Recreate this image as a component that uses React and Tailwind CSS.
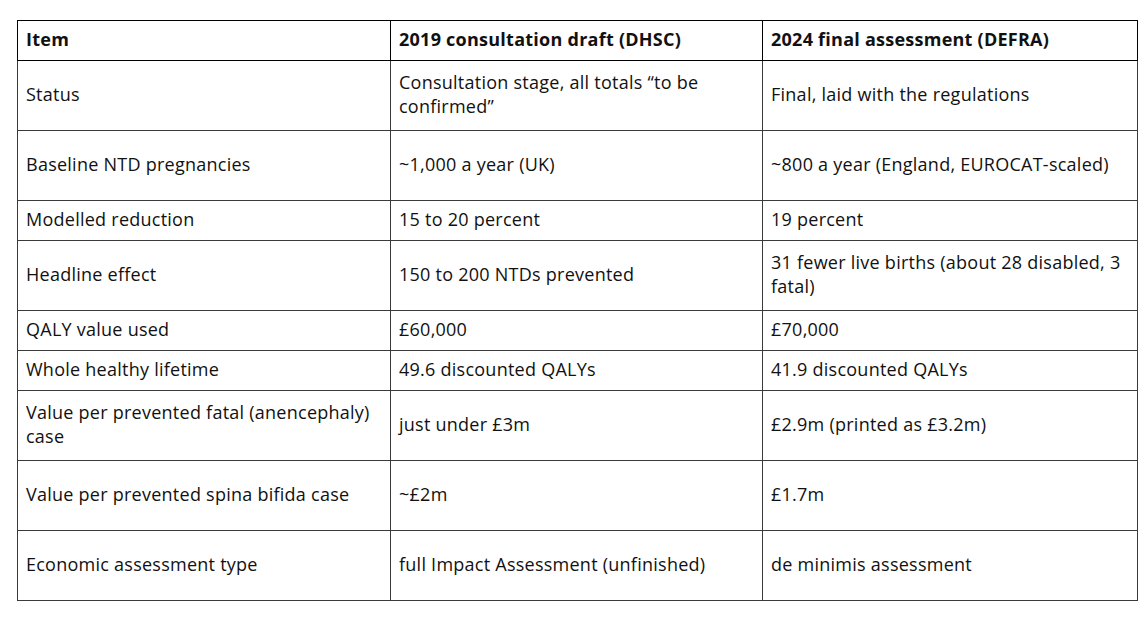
import React from 'react'

const rows = [
  { h: 'h-[70px]', a: 'Status', b: 'Consultation stage, all totals “to be confirmed”', c: 'Final, laid with the regulations' },
  { h: 'h-[70px]', a: 'Baseline NTD pregnancies', b: '~1,000 a year (UK)', c: '~800 a year (England, EUROCAT-scaled)' },
  { h: 'h-[40px]', a: 'Modelled reduction', b: '15 to 20 percent', c: '19 percent' },
  { h: 'h-[70px]', a: 'Headline effect', b: '150 to 200 NTDs prevented', c: '31 fewer live births (about 28 disabled, 3 fatal)' },
  { h: 'h-[40px]', a: 'QALY value used', b: '£60,000', c: '£70,000' },
  { h: 'h-[40px]', a: 'Whole healthy lifetime', b: '49.6 discounted QALYs', c: '41.9 discounted QALYs' },
  { h: 'h-[70px]', a: 'Value per prevented fatal (anencephaly) case', b: 'just under £3m', c: '£2.9m (printed as £3.2m)' },
  { h: 'h-[70px]', a: 'Value per prevented spina bifida case', b: '~£2m', c: '£1.7m' },
  { h: 'h-[70px]', a: 'Economic assessment type', b: 'full Impact Assessment (unfinished)', c: 'de minimis assessment' },
]

function App() {
  // text sits a touch high in the cell, like Word does
  const cell = 'border border-[#3a3a3a] px-2 pt-0 pb-[4px] align-middle text-left'

  return (
    <div className="min-h-screen bg-white pt-[20px] pl-[17px] font-['Open_Sans',sans-serif] text-[18px] leading-[24px] tracking-[0.25px] text-[#111]">
      <table className="table-fixed border-collapse w-[1120px]">
        <colgroup>
          <col className="w-[373px]" />
          <col className="w-[372px]" />
          <col className="w-[375px]" />
        </colgroup>
        <thead>
          <tr className="h-[40px]">
            <th className={cell + ' font-bold border-black'}>Item</th>
            <th className={cell + ' font-bold border-black'}>2019 consultation draft (DHSC)</th>
            <th className={cell + ' font-bold border-black'}>2024 final assessment (DEFRA)</th>
          </tr>
        </thead>
        <tbody>
          {rows.map((r) => (
            <tr key={r.a} className={r.h}>
              <td className={cell}>{r.a}</td>
              <td className={cell}>{r.b}</td>
              <td className={cell}>{r.c}</td>
            </tr>
          ))}
        </tbody>
      </table>
    </div>
  )
}

export default App
